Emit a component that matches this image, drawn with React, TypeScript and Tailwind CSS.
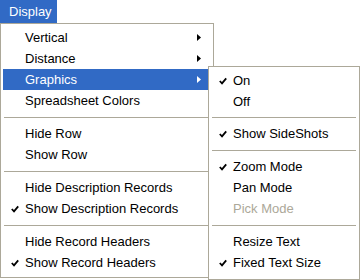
type Item =
  | { sep: true; h?: string }
  | { label: string; checked?: boolean; arrow?: boolean; active?: boolean; disabled?: boolean };

const mainItems: Item[] = [
  { label: "Vertical", arrow: true },
  { label: "Distance", arrow: true },
  { label: "Graphics", arrow: true, active: true },
  { label: "Spreadsheet Colors" },
  { sep: true },
  { label: "Hide Row" },
  { label: "Show Row" },
  { sep: true },
  { label: "Hide Description Records" },
  { label: "Show Description Records", checked: true },
  { sep: true },
  { label: "Hide Record Headers" },
  { label: "Show Record Headers", checked: true },
];

const subItems: Item[] = [
  { label: "On", checked: true },
  { label: "Off" },
  { sep: true, h: "h-[11px]" },
  { label: "Show SideShots", checked: true },
  { sep: true },
  { label: "Zoom Mode", checked: true },
  { label: "Pan Mode" },
  { label: "Pick Mode", disabled: true },
  { sep: true },
  { label: "Resize Text" },
  { label: "Fixed Text Size", checked: true },
];

function Check({ white }: { white?: boolean }) {
  return (
    <svg width="8" height="8" viewBox="0 0 8 8" className="shrink-0">
      <path d="M0.8 4 L3 6.3 L7.2 1.3" fill="none" stroke={white ? "#fff" : "#000"} strokeWidth="1.8" />
    </svg>
  );
}

function Arrow({ white }: { white?: boolean }) {
  return (
    <svg width="4" height="7" viewBox="0 0 4 7" className="shrink-0">
      <path d="M0 0 L4 3.5 L0 7 Z" fill={white ? "#fff" : "#000"} />
    </svg>
  );
}

function MenuList({ items }: { items: Item[] }) {
  return (
    <>
      {items.map((it, i) =>
        "sep" in it ? (
          <div key={i} className={(it.h ?? "h-[12px]") + " flex items-center px-[3px]"}>
            <div className="h-px w-full bg-[#aca899]" />
          </div>
        ) : (
          <div
            key={i}
            className={
              "h-[21px] flex items-center mx-[2px] " +
              (it.active ? "bg-[#316ac5] text-white" : it.disabled ? "text-[#aca899]" : "text-black")
            }
          >
            <div className="w-[22px] flex justify-center pl-[2px]">{it.checked && <Check white={it.active} />}</div>
            <span className="flex-1 whitespace-nowrap">{it.label}</span>
            <div className="w-[14px]">{it.arrow && <Arrow white={it.active} />}</div>
          </div>
        )
      )}
    </>
  );
}

export default function App() {
  return (
    <div
      className="relative w-[362px] h-[280px] bg-white overflow-hidden text-[13px] leading-none"
      style={{ fontFamily: '"Liberation Sans", Arial, sans-serif' }}
    >
      <div className="h-[23px] flex">
        <div className="w-[57px] bg-[#316ac5] text-white flex items-center pl-[9px]">Display</div>
      </div>
      <div className="w-[214px] border border-[#aca899] bg-white pt-[3px] pb-[4px]">
        <MenuList items={mainItems} />
      </div>
      <div className="absolute left-[208px] top-[66px] w-[152px] h-[214px] border border-[#aca899] bg-white pt-[3px]">
        <MenuList items={subItems} />
      </div>
    </div>
  );
}
